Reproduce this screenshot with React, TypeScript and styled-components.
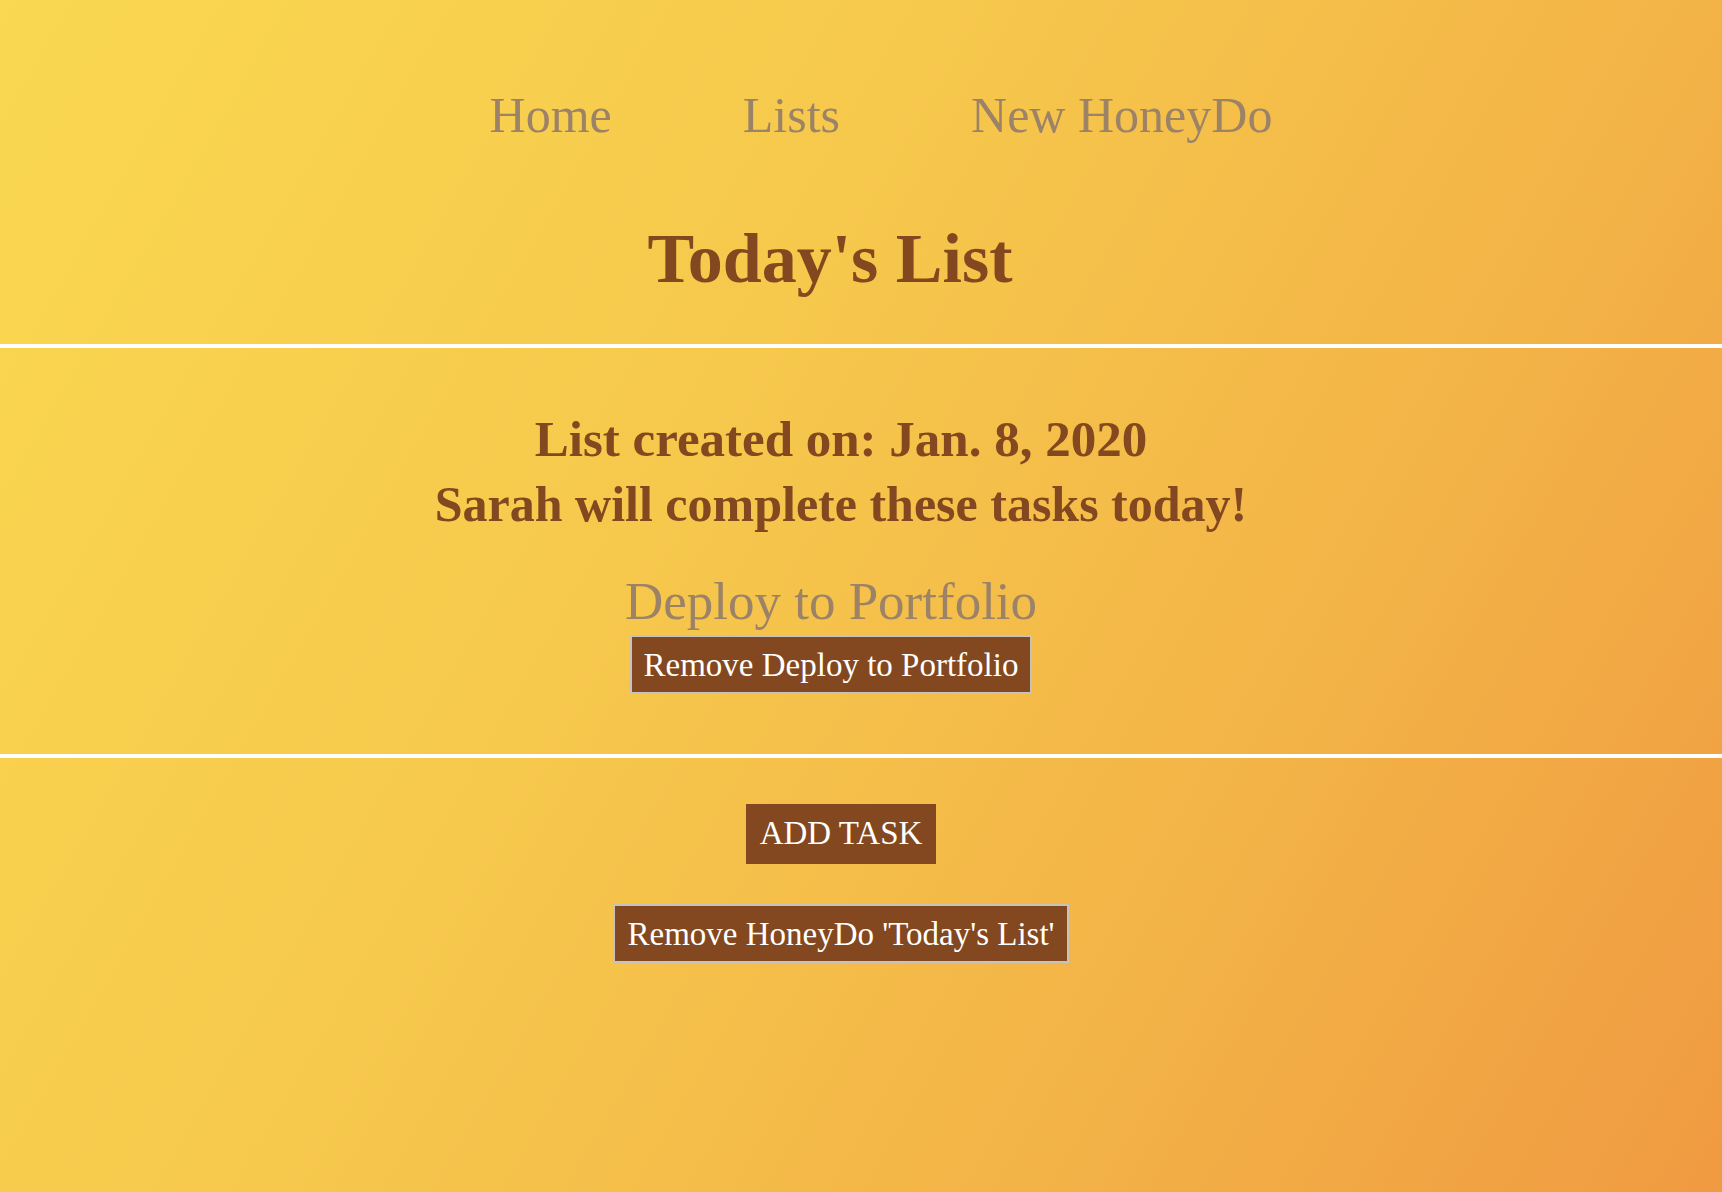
import React from "react";
import styled, { createGlobalStyle } from "styled-components";

const GlobalStyle = createGlobalStyle`
  html, body {
    margin: 0;
    padding: 0;
  }
  body {
    min-height: 100vh;
    font-family: "Liberation Serif", "Times New Roman", serif;
    background: linear-gradient(120deg, #fad850 0%, #f6c84c 40%, #f3b447 70%, #f09a41 100%);
    background-attachment: fixed;
  }
`;

const Page = styled.div`
  min-height: 100vh;
  display: flex;
  flex-direction: column;
`;

const Nav = styled.ul`
  list-style: none;
  margin: 0;
  padding: 90px 0 0 40px;
  display: flex;
  justify-content: center;
  gap: 131px;
`;

const NavItem = styled.li`
  font-size: 50px;
  line-height: 50px;
  color: #9c8368;
  cursor: pointer;
`;

const Title = styled.h1`
  margin: 84px 0 0;
  padding-right: 62px;
  text-align: center;
  font-size: 70px;
  line-height: 70px;
  font-weight: bold;
  color: #83481f;
`;

const Divider = styled.hr<{ $gap: number }>`
  margin: ${(p) => p.$gap}px 0 0;
  border: none;
  height: 4px;
  background: #ffffff;
`;

const Info = styled.section`
  margin-top: 59px;
  padding-right: 40px;
  text-align: center;
  color: #83481f;
`;

const InfoLine = styled.h2<{ $size: number }>`
  margin: 0;
  font-size: ${(p) => p.$size}px;
  line-height: 65px;
  font-weight: bold;
`;

const TaskItem = styled.div`
  margin-top: 38px;
  padding-right: 60px;
  display: flex;
  flex-direction: column;
  align-items: center;
`;

const TaskName = styled.div`
  font-size: 53px;
  line-height: 52px;
  color: #9c8368;
`;

const Button = styled.button<{ $bordered?: boolean }>`
  font-family: "Liberation Serif", "Times New Roman", serif;
  font-size: 33px;
  line-height: 38px;
  color: #ffffff;
  background: #83481f;
  border: ${(p) => (p.$bordered ? "2px solid #c6c3bd" : "none")};
  padding: ${(p) => (p.$bordered ? "9px 12px 8px" : "10px 14px 12px")};
  margin: 0;
  cursor: pointer;
`;

const RemoveTaskButton = styled(Button)`
  margin-top: 8px;
`;

const Actions = styled.div`
  margin-top: 46px;
  padding-right: 40px;
  display: flex;
  flex-direction: column;
  align-items: center;
  gap: 40px;
`;

export default function App() {
  return (
    <>
      <GlobalStyle />
      <Page>
        <Nav>
          <NavItem>Home</NavItem>
          <NavItem>Lists</NavItem>
          <NavItem>New HoneyDo</NavItem>
        </Nav>
        <Title>Today's List</Title>
        <Divider $gap={50} />
        <Info>
          <InfoLine $size={51}>List created on: Jan. 8, 2020</InfoLine>
          <InfoLine $size={50}>Sarah will complete these tasks today!</InfoLine>
        </Info>
        <TaskItem>
          <TaskName>Deploy to Portfolio</TaskName>
          <RemoveTaskButton $bordered>Remove Deploy to Portfolio</RemoveTaskButton>
        </TaskItem>
        <Divider $gap={60} />
        <Actions>
          <Button>ADD TASK</Button>
          <Button $bordered>Remove HoneyDo 'Today's List'</Button>
        </Actions>
      </Page>
    </>
  );
}
